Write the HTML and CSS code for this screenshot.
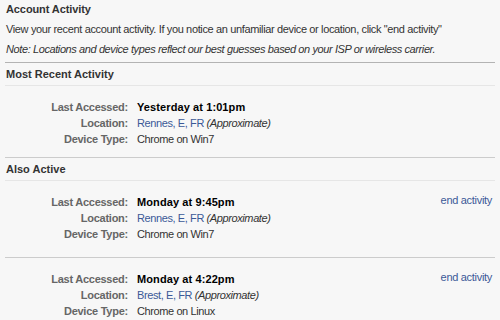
FILE: index.html
```html
<!DOCTYPE html>
<html>
<head>
<meta charset="utf-8">
<link rel="stylesheet" href="styles.css">
</head>
<body>
<div class="page">
  <div class="intro">
    <div class="title">Account Activity</div>
    <div class="desc">View your recent account activity. If you notice an unfamiliar device or location, click "end activity"</div>
    <div class="note">Note: Locations and device types reflect our best guesses based on your ISP or wireless carrier.</div>
  </div>

  <div class="section-head">Most Recent Activity</div>
  <div class="session first">
    <div class="details">
      <div class="label">Last Accessed:</div><div class="value strong">Yesterday at 1:01pm</div>
      <div class="label">Location:</div><div class="value"><a class="link">Rennes, E, FR</a> <em>(Approximate)</em></div>
      <div class="label">Device Type:</div><div class="value">Chrome on Win7</div>
    </div>
  </div>

  <div class="section-head">Also Active</div>
  <div class="session">
    <div class="details">
      <div class="label">Last Accessed:</div><div class="value strong">Monday at 9:45pm</div>
      <div class="label">Location:</div><div class="value"><a class="link">Rennes, E, FR</a> <em>(Approximate)</em></div>
      <div class="label">Device Type:</div><div class="value">Chrome on Win7</div>
    </div>
    <a class="end link">end activity</a>
  </div>
  <div class="session last">
    <div class="details">
      <div class="label">Last Accessed:</div><div class="value strong">Monday at 4:22pm</div>
      <div class="label">Location:</div><div class="value"><a class="link">Brest, E, FR</a> <em>(Approximate)</em></div>
      <div class="label">Device Type:</div><div class="value">Chrome on Linux</div>
    </div>
    <a class="end link">end activity</a>
  </div>
</div>
</body>
</html>
```

FILE: styles.css
```css
html, body {
  margin: 0;
  padding: 0;
  background: #f7f7f7;
}
body {
  font-family: "Liberation Sans", Arial, sans-serif;
  font-size: 11px;
  color: #333;
  width: 500px;
  height: 320px;
  overflow: hidden;
}
.page {
  padding: 0 5px;
}
.intro {
  padding-left: 1px;
  padding-bottom: 3px;
  border-bottom: 1px solid #b3b3b3;
  white-space: nowrap;
}
.title {
  font-weight: bold;
  line-height: 18px;
  letter-spacing: -0.1px;
}
.desc {
  margin-top: 1px;
  line-height: 20px;
  letter-spacing: -0.36px;
}
.note {
  font-style: italic;
  line-height: 20px;
  letter-spacing: -0.4px;
}
.section-head {
  font-weight: bold;
  line-height: 21px;
  padding: 1px 0 0 1px;
  border-bottom: 1px solid #e6e6e6;
}
.session {
  display: flex;
  justify-content: space-between;
  align-items: flex-start;
  padding: 13px 3px 15px 0;
  border-bottom: 1px solid #cccccc;
}
.session.first {
  padding-bottom: 10px;
}
.session.last {
  border-bottom: none;
}
.details {
  display: grid;
  grid-template-columns: 123px auto;
  column-gap: 9px;
  line-height: 16px;
  white-space: nowrap;
}
.label {
  text-align: right;
  font-weight: bold;
  color: #666;
  letter-spacing: -0.25px;
}
.value {
  color: #333;
  letter-spacing: -0.4px;
}
.value.strong {
  font-weight: bold;
  color: #000;
  letter-spacing: 0.1px;
}
.link {
  color: #3b5998;
  text-decoration: none;
}
.end {
  line-height: 16px;
  margin-top: -2px;
  letter-spacing: -0.3px;
}
```
